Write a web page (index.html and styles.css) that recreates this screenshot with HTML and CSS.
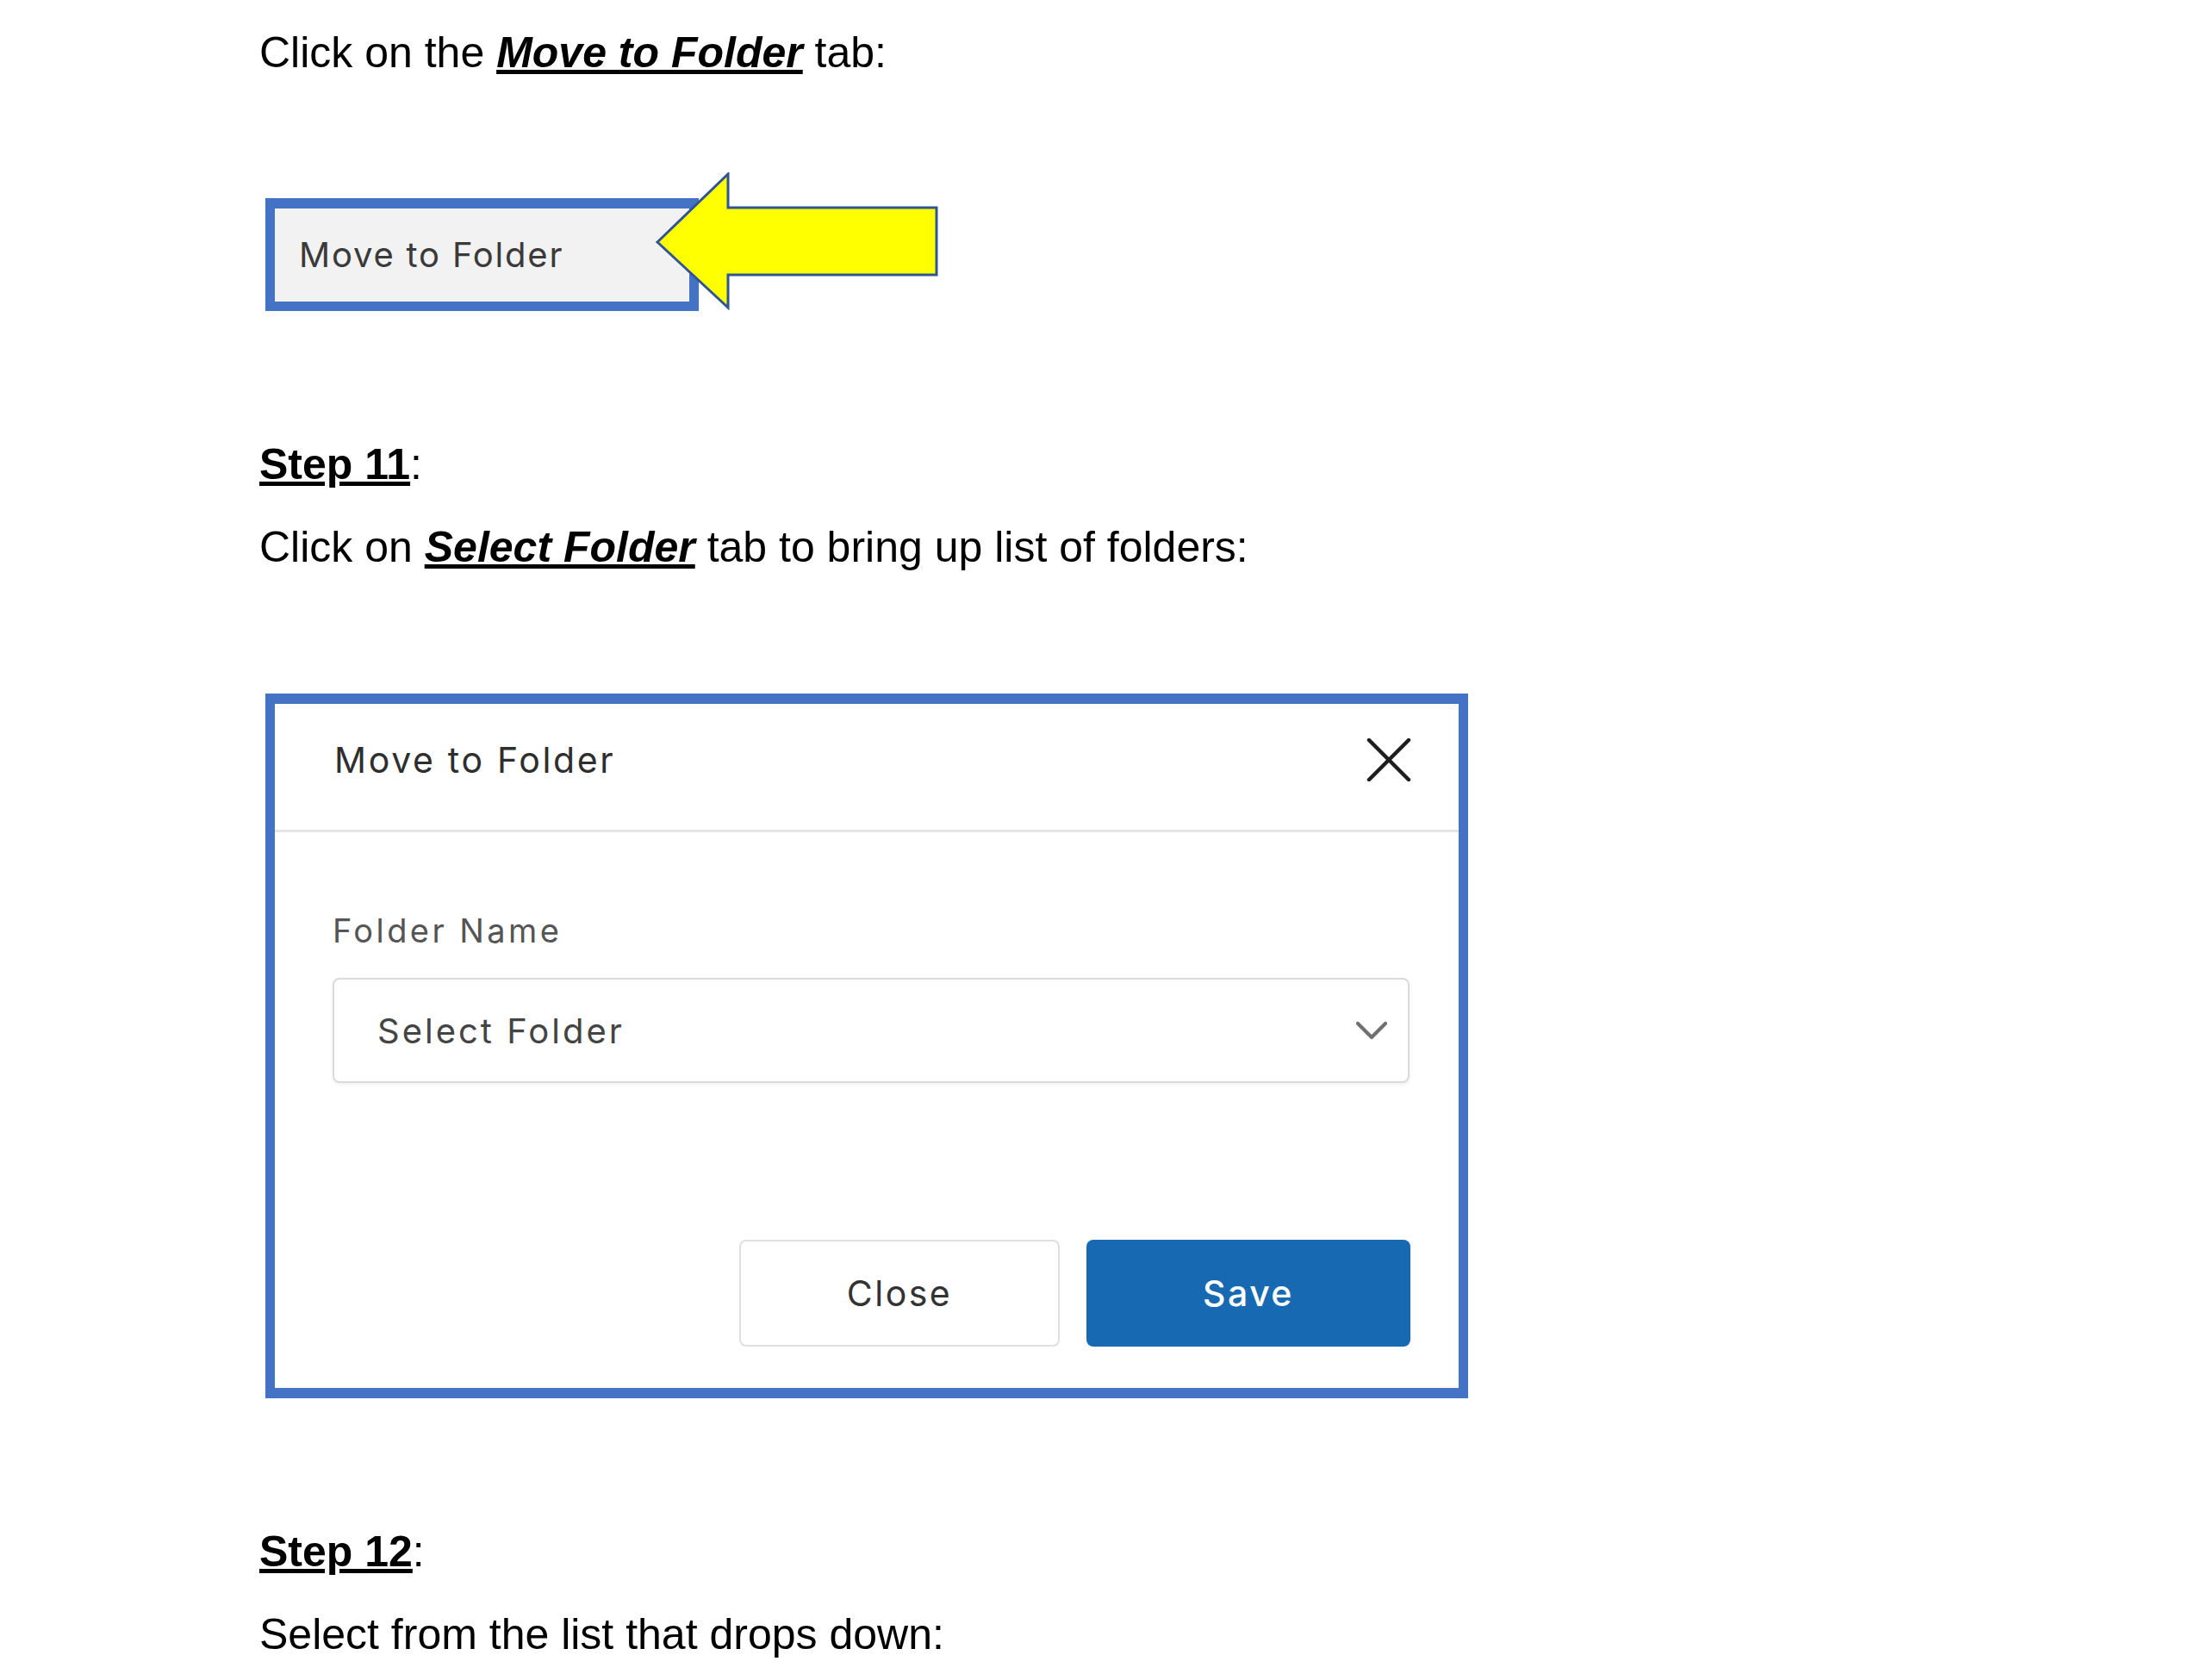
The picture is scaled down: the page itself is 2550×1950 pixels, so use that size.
FILE: index.html
```html
<!DOCTYPE html>
<html lang="en">
<head>
<meta charset="utf-8">
<title>Move to Folder – Steps</title>
<link rel="stylesheet" href="styles.css">
</head>
<body>
<div class="page">
  <p class="line first">Click on the <span class="emph">Move to Folder</span> tab:</p>

  <div class="figure-tab">
    <div class="tab-box">Move to Folder</div>
    <svg class="arrow" width="330" height="160" viewBox="0 0 330 160" aria-hidden="true">
      <polygon points="2,81 84,2 84,41 326,41 326,119 84,119 84,157" fill="#ffff00" stroke="#2f5597" stroke-width="3" stroke-linejoin="miter"/>
    </svg>
  </div>

  <p class="line step step11"><span class="step-label">Step 11</span>:</p>
  <p class="line after-step">Click on <span class="emph">Select Folder</span> tab to bring up list of folders:</p>

  <div class="dialog">
    <div class="dialog-header">
      <span class="dialog-title">Move to Folder</span>
      <svg class="close-x" width="52" height="50" viewBox="0 0 52 50" aria-hidden="true">
        <line x1="3" y1="2" x2="49" y2="48" stroke="#1e1e1e" stroke-width="4.5" stroke-linecap="round"/>
        <line x1="49" y1="2" x2="3" y2="48" stroke="#1e1e1e" stroke-width="4.5" stroke-linecap="round"/>
      </svg>
    </div>
    <div class="dialog-body">
      <div class="field-label">Folder Name</div>
      <div class="select">
        <span class="select-text">Select Folder</span>
        <svg class="chevron" width="40" height="24" viewBox="0 0 40 24" aria-hidden="true">
          <polyline points="4,4 20,20 36,4" fill="none" stroke="#707070" stroke-width="4.2" stroke-linecap="round" stroke-linejoin="round"/>
        </svg>
      </div>
    </div>
    <div class="dialog-footer">
      <div class="btn btn-close">Close</div>
      <div class="btn btn-save">Save</div>
    </div>
  </div>

  <p class="line step step12"><span class="step-label">Step 12</span>:</p>
  <p class="line after-step">Select from the list that drops down:</p>
</div>
</body>
</html>
```

FILE: styles.css
```css
html, body {
  margin: 0;
  padding: 0;
  background: #ffffff;
}

.page {
  padding: 32px 0 0 301px;
  font-family: "Liberation Sans", Arial, sans-serif;
  color: #000;
}

.line {
  margin: 0;
  font-size: 50px;
  line-height: 58px;
  height: 58px;
  white-space: nowrap;
}

.emph {
  font-weight: bold;
  font-style: italic;
  text-decoration: underline;
}

.step-label {
  font-weight: bold;
  text-decoration: underline;
}

.step11 { margin-top: 149px; }
.step12 { margin-top: 149px; }
.after-step { margin-top: 38px; }

/* Figure 1: tab with arrow */
.figure-tab {
  position: relative;
  margin-top: 110px;
  padding-top: 30px;
  height: 131px;
  width: 800px;
}

.tab-box {
  box-sizing: border-box;
  margin-left: 7px;
  width: 503px;
  height: 131px;
  border: 11px solid #4472c4;
  border-top-width: 12px;
  background: #f2f2f2;
  display: flex;
  align-items: center;
  padding-left: 28px;
  padding-bottom: 2px;
  font-family: "Inter", "Noto Sans", sans-serif;
  font-size: 40px;
  letter-spacing: 0.045em;
  color: #3a3a3a;
}

.arrow {
  position: absolute;
  left: 460px;
  top: 0;
}

/* Figure 2: dialog */
.dialog {
  box-sizing: border-box;
  margin: 141px 0 0 7px;
  width: 1396px;
  height: 818px;
  border: 12px solid #4472c4;
  border-left-width: 11px;
  border-right-width: 11px;
  background: #fff;
  font-family: "Inter", "Noto Sans", sans-serif;
  display: flex;
  flex-direction: column;
}

.dialog-header {
  box-sizing: border-box;
  height: 149px;
  padding: 0 55px 16px 69px;
  border-bottom: 3px solid #e4e4e4;
  display: flex;
  align-items: center;
  justify-content: space-between;
}

.dialog-title {
  font-size: 41px;
  letter-spacing: 0.065em;
  color: #2e2e2e;
}

.dialog-body {
  padding: 92px 57px 0 67px;
}

.field-label {
  height: 44px;
  line-height: 44px;
  font-size: 38px;
  letter-spacing: 0.09em;
  color: #555;
}

.select {
  box-sizing: border-box;
  margin-top: 33px;
  height: 122px;
  border: 2px solid #dadada;
  border-radius: 8px;
  box-shadow: 0 2px 4px rgba(0, 0, 0, 0.06);
  display: flex;
  align-items: center;
  justify-content: space-between;
  padding: 0 22px 0 50px;
}

.select-text {
  font-size: 40px;
  letter-spacing: 0.075em;
  color: #444;
}

.dialog-footer {
  margin-top: 182px;
  padding-right: 56px;
  display: flex;
  justify-content: flex-end;
  gap: 31px;
}

.btn {
  box-sizing: border-box;
  height: 124px;
  border-radius: 8px;
  display: flex;
  align-items: center;
  justify-content: center;
  font-size: 41px;
  letter-spacing: 0.06em;
}

.btn-close {
  width: 372px;
  border: 2px solid #e0e0e0;
  background: #fff;
  color: #333;
}

.btn-save {
  width: 376px;
  background: #176ab1;
  color: #fff;
  font-weight: 500;
}
```
